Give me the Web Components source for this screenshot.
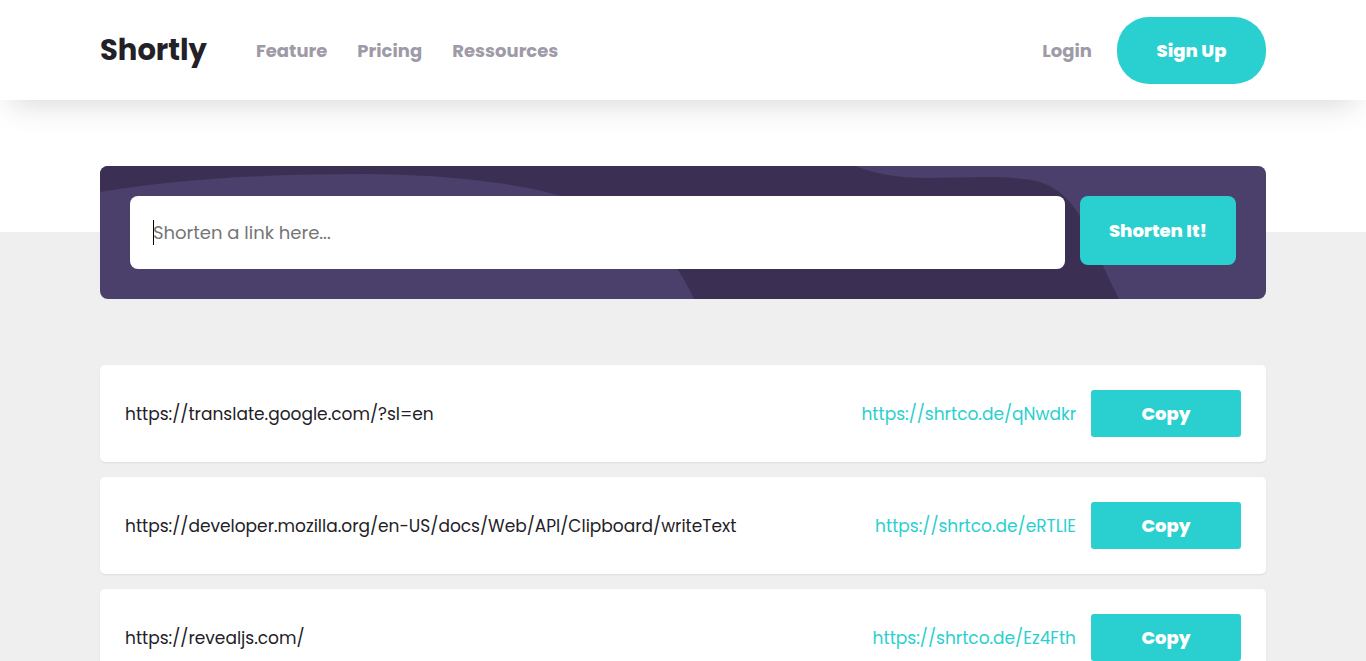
<!DOCTYPE html>
<html lang="en">
<head>
<meta charset="utf-8">
<meta name="viewport" content="width=device-width, initial-scale=1">
<title>Shortly</title>
<style>
  html { scrollbar-width: none; }
  body {
    --teal: #2acfcf;
    --ink: #232127;
    --muted: #9e9aa7;
    --violet: #4b3f6b;
    --violet-dark: #3b3054;
    --gutter: 100px;
    margin: 0;
    background: #fff;
    color: var(--ink);
    font-family: Poppins, Inter, sans-serif;
    font-size: 17px;
  }
</style>
</head>
<body>
<site-header>
  <nav-link href="#feature">Feature</nav-link>
  <nav-link href="#pricing">Pricing</nav-link>
  <nav-link href="#ressources">Ressources</nav-link>
  <nav-link slot="account" href="#login">Login</nav-link>
  <action-button slot="account" kind="pill">Sign Up</action-button>
</site-header>
<link-workspace>
  <shorten-form slot="form"></shorten-form>
  <link-row short="https://shrtco.de/qNwdkr">https://translate.google.com/?sl=en</link-row>
  <link-row short="https://shrtco.de/eRTLlE">https://developer.mozilla.org/en-US/docs/Web/API/Clipboard/writeText</link-row>
  <link-row short="https://shrtco.de/Ez4Fth">https://revealjs.com/</link-row>
</link-workspace>

<template id="site-header">
  <style>
    :host { display: block; position: relative; z-index: 1; }
    header {
      display: flex; align-items: center; justify-content: space-between;
      min-height: 100px; padding: 0 var(--gutter); background: #fff;
      box-shadow: 0 15px 30px -10px rgba(0, 0, 0, .15);
    }
    .start { display: flex; align-items: center; gap: 49px; }
    nav { display: flex; gap: 30px; }
    .account { display: flex; align-items: center; gap: 25px; }
    .logo { color: var(--ink); font-size: 29px; font-weight: 700; line-height: 40px; text-decoration: none; }
  </style>
  <header>
    <div class="start">
      <a class="logo" href="#home">Shortly</a>
      <nav aria-label="Main"><slot></slot></nav>
    </div>
    <div class="account"><slot name="account"></slot></div>
  </header>
</template>

<template id="nav-link">
  <style>
    :host { display: block; }
    a { display: block; color: var(--muted); font-size: 18px; font-weight: 700; line-height: 27px; text-decoration: none; }
  </style>
  <a><slot></slot></a>
</template>

<template id="action-button">
  <style>
    :host { display: block; flex: none; }
    button {
      display: block; width: 100%; padding: 20px 0; border: 0; border-radius: 8px;
      background: var(--teal); color: #fff; cursor: pointer;
      font-family: inherit; font-size: 18px; font-weight: 800; line-height: 27px;
    }
    :host([kind="pill"]) { width: 149px; }
    :host([kind="pill"]) button { border-radius: 32px; }
    :host([kind="submit"]) { width: 156px; }
    :host([kind="submit"]) button { padding: 21px 0; }
    :host([kind="copy"]) { width: 150px; }
    :host([kind="copy"]) button { padding: 10px 0; border-radius: 3px; }
  </style>
  <button type="button"><slot></slot></button>
</template>

<template id="shorten-form">
  <style>
    :host { display: block; }
    form {
      position: relative; display: flex; align-items: flex-start; gap: 15px;
      padding: 30px; border-radius: 8px; overflow: hidden; background: var(--violet);
    }
    svg { position: absolute; inset: 0; width: 100%; height: 100%; }
    path { fill: var(--violet-dark); }
    label { position: relative; flex: 1; min-width: 0; }
    label::after {
      content: ""; position: absolute; left: 23px; top: 24px;
      width: 1px; height: 25px; background: #000;
    }
    input {
      display: block; box-sizing: border-box; width: 100%; height: 73px; padding: 0 23px;
      border: 0; border-radius: 8px; outline: 0; background: #fff; color: var(--ink);
      font-family: inherit; font-size: 18px; caret-color: transparent;
    }
    input::placeholder { color: #757575; opacity: 1; }
    action-button { position: relative; }
  </style>
  <form>
    <svg viewBox="0 0 1166 133" preserveAspectRatio="none" aria-hidden="true">
      <path d="M0 0H755C776 8 797 12 826 12C867 12 900 9 931 14C955 18 972 33 986 61C996 83 1006 108 1019 133H594C589 122 583 112 577 102C550 60 508 41 457 29C422 18 345 8 260 8C165 8 80 13 0 26Z"/>
    </svg>
    <label><input type="url" placeholder="Shorten a link here..." aria-label="Link to shorten" autofocus></label>
    <action-button kind="submit">Shorten It!</action-button>
  </form>
</template>

<template id="link-workspace">
  <style>
    :host { display: block; padding-top: 132px; }
    main { display: flow-root; padding: 0 var(--gutter) 60px; background: #efefef; }
    .form { position: relative; margin-top: -66px; padding-bottom: 66px; }
    .list { display: flex; flex-direction: column; gap: 15px; }
  </style>
  <main>
    <div class="form"><slot name="form"></slot></div>
    <div class="list"><slot></slot></div>
  </main>
</template>

<template id="link-row">
  <style>
    :host { display: block; }
    article {
      display: flex; align-items: center; gap: 15px; padding: 25px;
      border-radius: 5px; background: #fff; box-shadow: 0 1px 2px rgba(0, 0, 0, .08);
    }
    .long { flex: 1; min-width: 0; overflow-wrap: anywhere; }
    .long, a { line-height: 26px; }
    a { color: var(--teal); text-decoration: none; }
  </style>
  <article>
    <span class="long"><slot></slot></span>
    <a></a>
    <action-button kind="copy">Copy</action-button>
  </article>
</template>

<script>
  class TemplateElement extends HTMLElement {
    constructor() {
      super();
      const template = document.getElementById(this.localName);
      this.attachShadow({ mode: "open" }).append(template.content.cloneNode(true));
    }
  }

  class SiteHeader extends TemplateElement {}
  class LinkWorkspace extends TemplateElement {}

  class NavLink extends TemplateElement {
    connectedCallback() {
      this.shadowRoot.querySelector("a").href = this.getAttribute("href");
    }
  }

  class ActionButton extends TemplateElement {}

  class ShortenForm extends TemplateElement {
    connectedCallback() {
      this.shadowRoot.querySelector("form").addEventListener("submit", e => e.preventDefault());
    }
  }

  class LinkRow extends TemplateElement {
    connectedCallback() {
      const short = this.getAttribute("short");
      const link = this.shadowRoot.querySelector("a");
      link.href = short;
      link.textContent = short;
      this.shadowRoot.querySelector("action-button").addEventListener("click", () => {
        navigator.clipboard?.writeText(short);
      });
    }
  }

  customElements.define("action-button", ActionButton);
  customElements.define("nav-link", NavLink);
  customElements.define("site-header", SiteHeader);
  customElements.define("shorten-form", ShortenForm);
  customElements.define("link-workspace", LinkWorkspace);
  customElements.define("link-row", LinkRow);
</script>
</body>
</html>
